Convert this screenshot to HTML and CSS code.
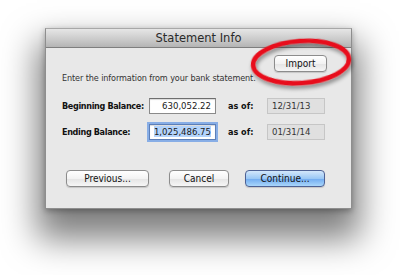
FILE: index.html
```html
<!DOCTYPE html>
<html lang="en">
<head>
  <meta charset="UTF-8">
  <title>Statement Info</title>
  <link rel="stylesheet" href="styles.css">
</head>
<body>
  <div class="stage">
    <div class="window">
      <div class="titlebar">Statement Info</div>
      <div class="content">
        <div class="import-row">
          <button class="btn import">Import</button>
        </div>
        <p class="hint">Enter the information from your bank statement.</p>

        <div class="field-row">
          <label class="label">Beginning Balance:</label>
          <div class="input">630,052.22</div>
          <span class="as-of">as of:</span>
          <div class="date">12/31/13</div>
        </div>

        <div class="field-row">
          <label class="label">Ending Balance:</label>
          <div class="input focused"><span class="selected">1,025,486.75</span></div>
          <span class="as-of">as of:</span>
          <div class="date">01/31/14</div>
        </div>

        <div class="button-row">
          <button class="btn previous">Previous...</button>
          <button class="btn cancel">Cancel</button>
          <button class="btn default continue">Continue...</button>
        </div>
      </div>
    </div>

    <!-- hand drawn highlight round the Import button -->
    <svg class="circle-mark" width="116" height="60" viewBox="0 0 116 60">
      <defs>
        <filter id="markShadow" x="-20%" y="-30%" width="140%" height="170%">
          <feGaussianBlur in="SourceAlpha" stdDeviation="2"/>
          <feOffset dx="1" dy="3" result="blur"/>
          <feComponentTransfer><feFuncA type="linear" slope="0.45"/></feComponentTransfer>
          <feMerge><feMergeNode/><feMergeNode in="SourceGraphic"/></feMerge>
        </filter>
      </defs>
      <ellipse cx="57" cy="27" rx="48" ry="21" fill="none" stroke="#e8101a" stroke-width="4.5"
               transform="rotate(-4 57 27)" filter="url(#markShadow)"/>
    </svg>
  </div>
</body>
</html>
```

FILE: styles.css
```css
body {
  margin: 0;
  background: #ffffff;
  font-family: "DejaVu Sans Condensed", "DejaVu Sans", sans-serif;
  color: #1a1a1a;
}

.stage {
  position: relative;
  width: 400px;
  height: 275px;
  padding: 28px 0 0 45px;
  box-sizing: border-box;
}

.window {
  width: 307px;
  height: 181px;
  box-sizing: border-box;
  background: #e8e8e8;
  border: 1px solid #8e8e8e;
  border-top-color: #a8a8a8;
  box-shadow: 0 22px 32px 8px rgba(0, 0, 0, 0.5), 0 2px 6px rgba(0, 0, 0, 0.3);
  display: flex;
  flex-direction: column;
}

.titlebar {
  height: 18px;
  line-height: 18px;
  text-align: center;
  font-family: "DejaVu Sans", sans-serif;
  font-size: 11.5px;
  color: #2a2a2a;
  background: linear-gradient(#e6e6e6, #c9c9c9 60%, #b4b4b4);
  border-bottom: 1px solid #7e7e7e;
}

.content {
  flex: 1;
  padding: 7px 24px 0 16px;
  display: flex;
  flex-direction: column;
  white-space: nowrap;
}

.import-row {
  display: flex;
  justify-content: flex-end;
}

.hint {
  margin: 0;
  font-size: 9px;
  letter-spacing: -0.1px;
  line-height: 12px;
  color: #333;
}

.field-row {
  display: flex;
  align-items: center;
  height: 16px;
  margin-top: 14px;
}

.field-row + .field-row {
  margin-top: 10px;
}

.label {
  width: 87px;
  font-size: 9px;
  letter-spacing: -0.35px;
  font-weight: bold;
  color: #111;
}

.input {
  width: 67px;
  height: 16px;
  box-sizing: border-box;
  background: #fff;
  border: 1px solid #8a8a8a;
  border-top-color: #6e6e6e;
  box-shadow: inset 0 1px 1px rgba(0, 0, 0, 0.15);
  font-size: 9.5px;
  line-height: 14px;
  text-align: right;
  padding-right: 4px;
}

.input.focused {
  box-shadow: 0 0 0 2px #88aee6, inset 0 1px 1px rgba(0, 0, 0, 0.15);
  border-color: #5c7fb8;
}

.selected {
  background: #b3d3fb;
}

.as-of {
  width: 39px;
  margin-left: 12px;
  font-size: 9px;
  font-weight: bold;
  color: #111;
}

.date {
  width: 58px;
  height: 16px;
  box-sizing: border-box;
  background: #e0e0e0;
  border: 1px solid #c6c6c6;
  font-size: 9.5px;
  line-height: 14px;
  padding-left: 4px;
  color: #333;
}

.button-row {
  display: flex;
  margin-top: 30px;
  padding-left: 4px;
}

.btn {
  height: 17px;
  padding: 0;
  font-family: "DejaVu Sans Condensed", "DejaVu Sans", sans-serif;
  font-size: 10px;
  color: #111;
  border: 1px solid #8c8c8c;
  border-radius: 4px;
  background: linear-gradient(#ffffff, #f3f3f3 50%, #e4e4e4 51%, #f6f6f6);
  box-shadow: 0 1px 1px rgba(0, 0, 0, 0.15);
}

.import {
  width: 53px;
}

.previous {
  width: 83px;
}

.cancel {
  width: 60px;
  margin-left: 20px;
}

.continue {
  width: 80px;
  margin-left: 16px;
}

.btn.default {
  border-color: #4d6194;
  background: linear-gradient(#d3e7fb, #9bc8f5 50%, #6faaf0 51%, #a9d6fb);
}

.circle-mark {
  position: absolute;
  left: 244px;
  top: 35px;
}
```
